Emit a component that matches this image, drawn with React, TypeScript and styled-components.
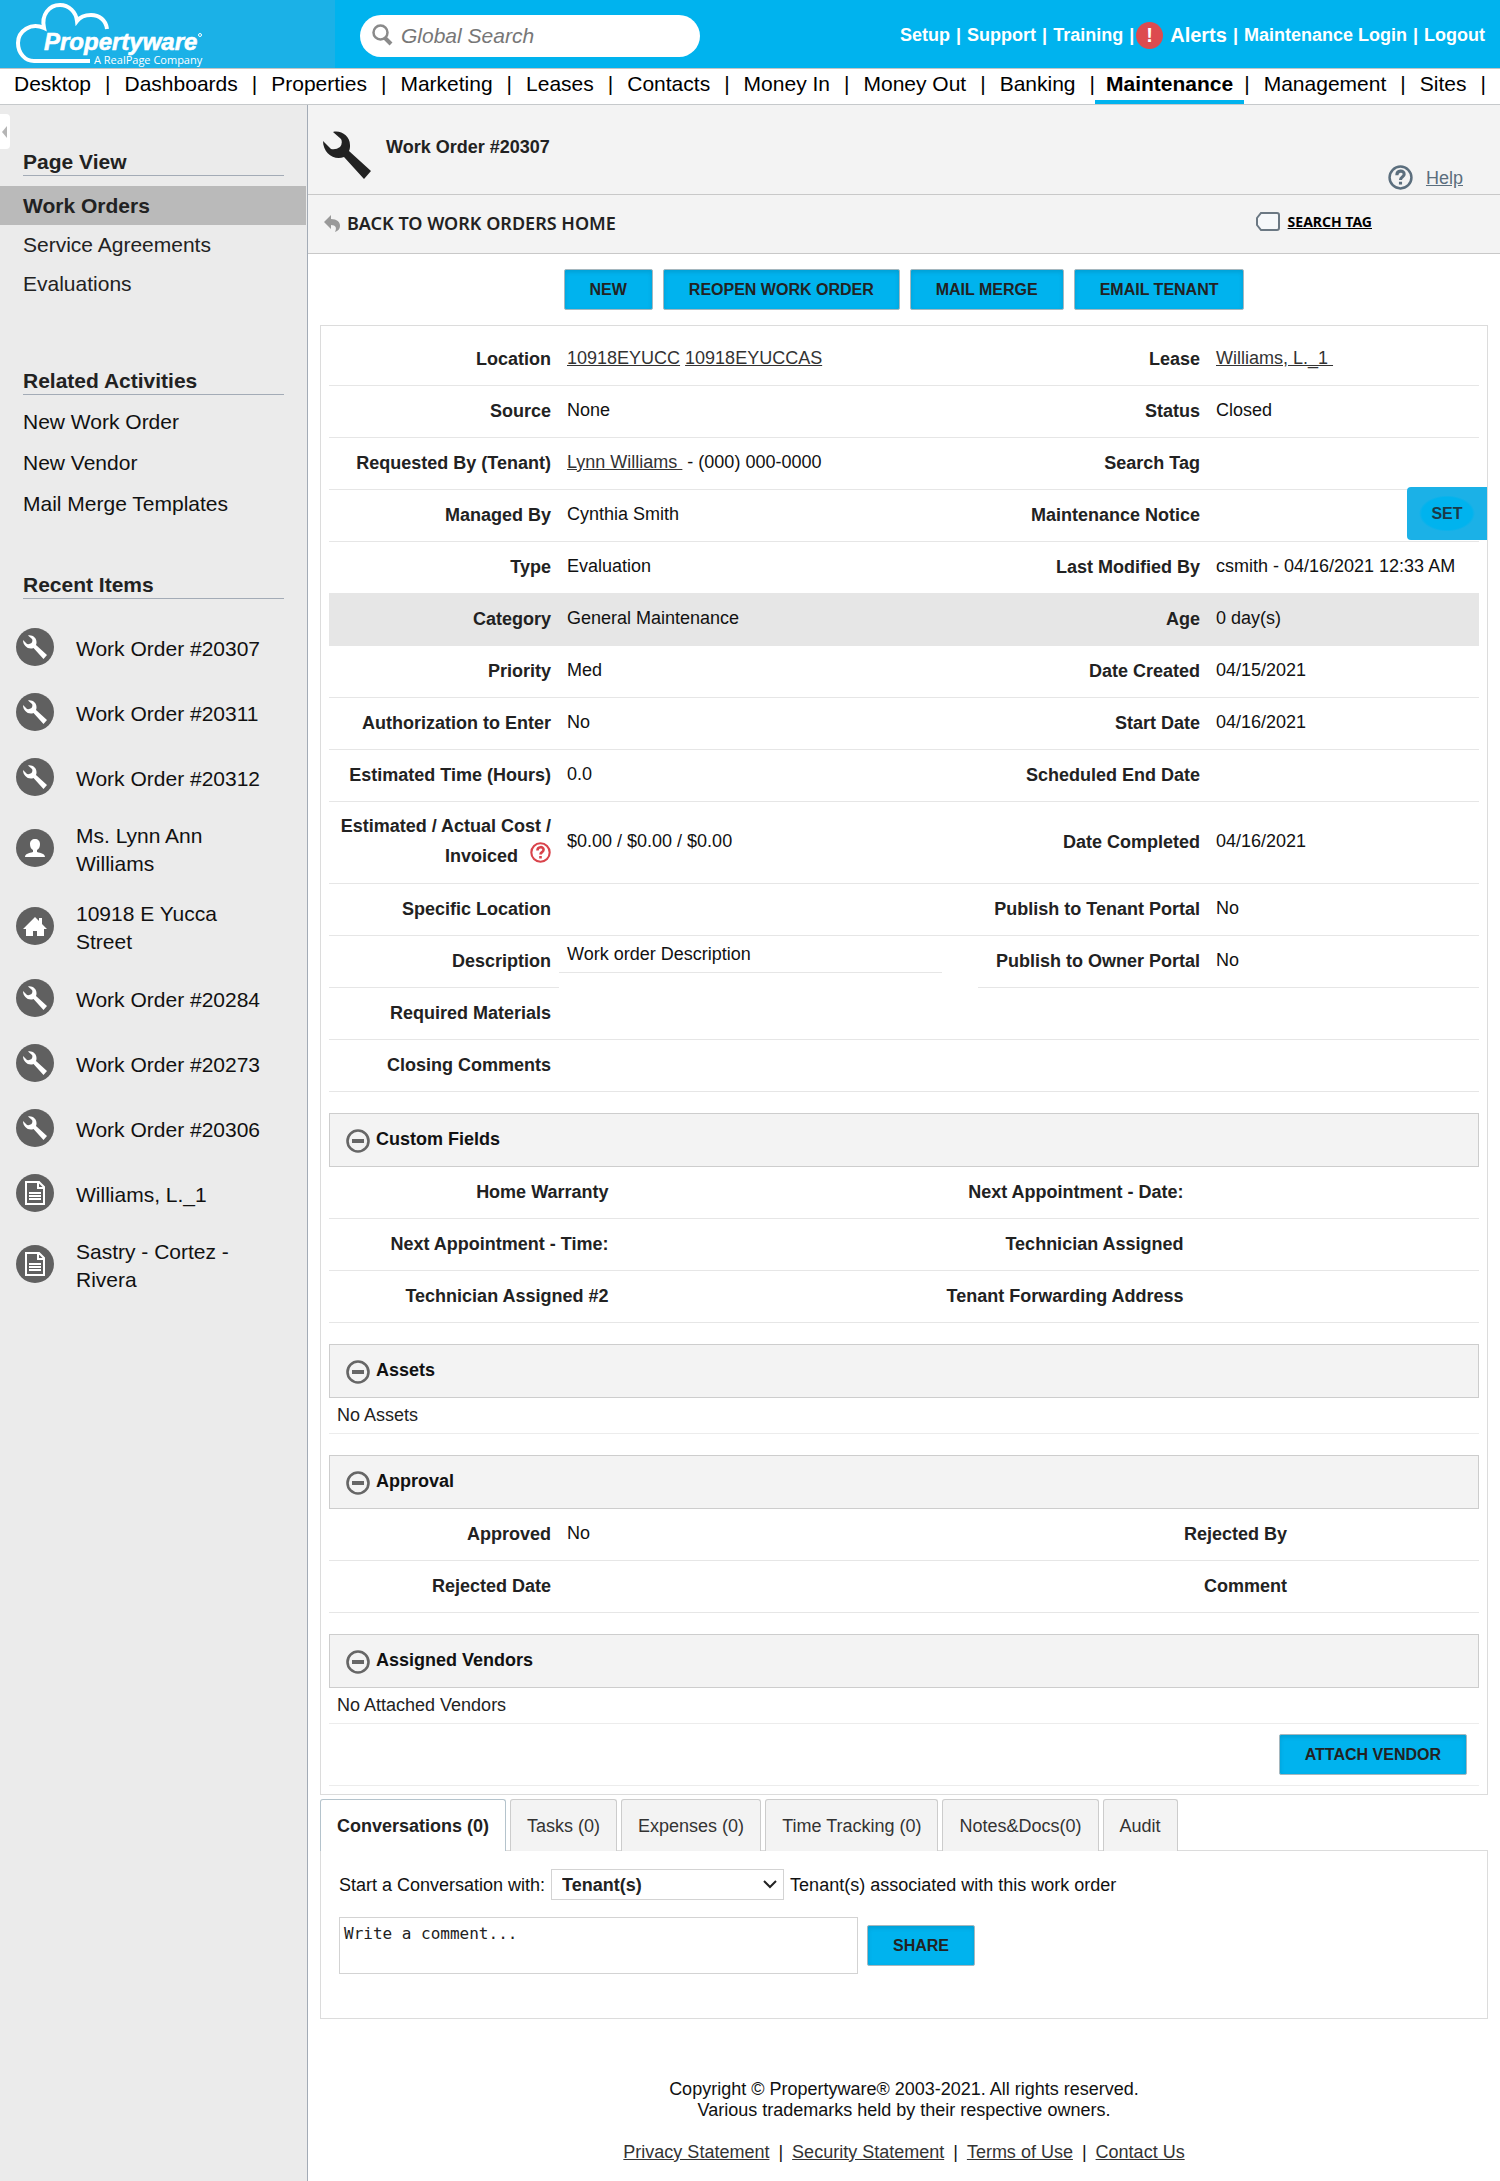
import React from "react";
import styled, { createGlobalStyle, css } from "styled-components";

const sans = `"Liberation Sans", Arial, sans-serif`;
const humanist = `"Noto Sans", "Open Sans", sans-serif`;
const brand = "#00b3ee";

const GlobalStyle = createGlobalStyle`
  * { box-sizing: border-box; }
  body { margin: 0; background: #fff; color: #222; font: 18px/30px ${sans}; }
  a { color: inherit; text-decoration: none; }
  ul, dl, dd, h1, h2, p { margin: 0; padding: 0; }
  ul { list-style: none; }
  svg { display: block; flex: none; }
`;

const Page = styled.div`
  display: flex;
  flex-direction: column;
  min-height: 100vh;
`;

/* ---------- Top bar ---------- */
const TopBar = styled.header`
  display: flex;
  align-items: stretch;
  height: 68px;
  background: ${brand};
  color: #fff;
`;
const Brand = styled.a`
  width: 335px;
  background: #1bb1e7;
`;
const SearchBox = styled.label`
  display: flex;
  align-items: center;
  gap: 6px;
  align-self: center;
  width: 340px;
  height: 42px;
  margin: 4px 0 0 25px;
  padding: 0 12px;
  border-radius: 21px;
  background: #fff;
`;
const SearchInput = styled.input`
  flex: 1;
  min-width: 0;
  border: 0;
  outline: 0;
  background: none;
  font: italic 21px/24px ${sans};
  color: #777;
  &::placeholder { color: #777; opacity: 1; }
`;
const TopLinks = styled.nav`
  display: flex;
  align-items: center;
  gap: 6px;
  margin-left: auto;
  padding: 2px 15px 0 0;
  font-weight: bold;
  white-space: nowrap;
`;
const AlertsLink = styled.a`
  display: flex;
  align-items: center;
  gap: 7px;
  margin-left: -4px;
  font-size: 20px;
`;
const AlertBadge = styled.span`
  width: 27px;
  height: 27px;
  border-radius: 50%;
  background: #dd4b4f;
  font: bold 20px/27px ${sans};
  text-align: center;
`;

/* ---------- Main navigation ---------- */
const NavBar = styled.nav`
  display: flex;
  height: 37px;
  border-top: 1px solid #c4c4c4;
  border-bottom: 1px solid #c6c9cb;
  overflow: hidden;
  white-space: nowrap;
  font-size: 21px;
  line-height: 30px;
  color: #000;
`;
const NavItem = styled.a<{ $active?: boolean }>`
  padding: 0 14px;
  ${(p) =>
    p.$active &&
    css`
      padding: 0 11px;
      border-bottom: 4px solid ${brand};
      font-weight: bold;
    `}
`;

/* ---------- Sidebar ---------- */
const Columns = styled.div`
  display: grid;
  grid-template-columns: 308px minmax(0, 1fr);
  flex: 1;
`;
const Sidebar = styled.aside`
  position: relative;
  padding: 42px 0 24px;
  border-right: 1px solid #a3abb6;
  background: #ebebeb;
  font-size: 21px;
  line-height: 28px;
`;
const Collapse = styled.button`
  position: absolute;
  top: 9px;
  left: 0;
  width: 10px;
  height: 35px;
  padding: 0 2px;
  border: 0;
  border-radius: 0 4px 4px 0;
  background: #fff;
`;
const SideTitle = styled.h2`
  margin: 0 23px;
  padding-top: 2px;
  border-bottom: 1px solid #a3abb6;
  font-size: 21px;
  line-height: 26px;
`;
const PageLinks = styled.ul`
  padding: 10px 1px 63px 0;
`;
const PageLink = styled.a<{ $active?: boolean }>`
  display: block;
  padding: 0 23px;
  line-height: 39px;
  ${(p) => p.$active && "background: #bababa; font-weight: bold;"}
`;
const ActivityLinks = styled.ul`
  padding: 6px 23px 46px;
  line-height: 41px;
  color: #111;
`;
const RecentList = styled.ul`
  padding-top: 17px;
`;
const RecentLink = styled.a`
  display: flex;
  align-items: center;
  gap: 22px;
  min-height: 65px;
  padding: 11px 40px 11px 16px;
  color: #111;
`;
const RecentIcon = styled.span`
  display: grid;
  place-items: center;
  flex: none;
  width: 38px;
  height: 38px;
  margin-bottom: 4px;
  border-radius: 50%;
  background: #606060;
  color: #fff;
`;

/* ---------- Page heading ---------- */
const Main = styled.main`
  min-width: 0;
`;
const HeadingBar = styled.div`
  display: flex;
  justify-content: space-between;
  height: 90px;
  padding: 26px 37px 0 15px;
  border-bottom: 1px solid #c8c8c8;
  background: #f3f3f3;
`;
const Heading = styled.div`
  display: flex;
  gap: 15px;
`;
const Title = styled.h1`
  font-size: 18px;
  line-height: 32px;
`;
const HelpLink = styled.a`
  display: flex;
  align-items: center;
  align-self: flex-end;
  gap: 13px;
  line-height: 32px;
  color: #5b6e7d;
  text-decoration: underline;
  & > svg { margin-bottom: 2px; }
`;
const ToolBar = styled.div`
  display: flex;
  align-items: center;
  justify-content: space-between;
  height: 59px;
  padding: 0 128px 2px 16px;
  border-bottom: 1px solid #c8c8c8;
  background: #f3f3f3;
  font-family: ${humanist};
`;
const BackLink = styled.a`
  display: flex;
  align-items: center;
  gap: 7px;
  font-weight: 600;
`;
const TagLink = styled.a`
  display: flex;
  align-items: center;
  gap: 8px;
  padding-bottom: 3px;
  font-size: 14px;
  font-weight: 700;
  color: #000;
  text-decoration: underline;
`;

/* ---------- Buttons ---------- */
const Button = styled.button`
  height: 41px;
  padding: 0 25px;
  border: 1px solid #a5b7be;
  border-radius: 2px;
  background: ${brand};
  box-shadow: inset 0 2px 4px rgba(0, 60, 90, 0.18);
  font: bold 16px/24px ${sans};
  color: #222;
  white-space: nowrap;
`;
const Actions = styled.div`
  display: flex;
  justify-content: center;
  gap: 10px;
  padding: 15px 12px;
`;

/* ---------- Detail panel ---------- */
const Panel = styled.section`
  margin: 0 12px 4px;
  padding: 8px;
  border: 1px solid #dcdcdc;
`;
type Split = "details" | "even" | "approval";
const splits: Record<Split, string> = {
  details: "230fr 419fr 230fr 271fr",
  even: "1fr 1fr 1fr 1fr",
  approval: "20fr 44fr 20fr 16fr",
};
const Row = styled.div<{ $split: Split; $marked?: boolean }>`
  position: relative;
  display: grid;
  grid-template-columns: ${(p) => splits[p.$split]};
  align-items: center;
  min-height: 52px;
  border-bottom: 1px solid #e6e6e6;
  ${(p) => p.$marked && "background: #e6e6e6;"}
`;
const Label = styled.dt`
  padding: 0 8px 2px;
  font-weight: bold;
  text-align: right;
`;
const CostLabel = styled(Label)`
  padding: 9px 8px 12px;
`;
const HelpMark = styled.span`
  display: inline-block;
  height: 20px;
  margin-left: 12px;
  vertical-align: baseline;
  line-height: 0;
`;
const Value = styled.dd`
  padding: 0 8px 4px;
  color: #111;
`;
const Link = styled.a`
  color: #333;
  text-decoration: underline;
  white-space: pre;
`;
const DescriptionRow = styled.div`
  display: grid;
  grid-template-columns: 230fr 383fr 36fr 230fr 271fr;
  min-height: 52px;
  & > dt, & > dd { padding-bottom: 0; border-bottom: 1px solid #e6e6e6; line-height: 51px; }
  & > dd:nth-of-type(2) { grid-column: 5; padding-bottom: 2px; line-height: 49px; }
  & > dt:nth-of-type(2) { grid-column: 4; }
`;
const DescriptionValue = styled(Value)`
  && { line-height: 36px; }
  align-self: start;
  height: 37px;
`;
const SetButton = styled.button`
  position: absolute;
  top: -3px;
  right: -8px;
  width: 80px;
  height: 53px;
  border: 0;
  border-radius: 4px 0 0 4px;
  background: radial-gradient(ellipse 28px 18px at center, ${brand} 90%, #1bb1e7);
  font: bold 16px/24px ${sans};
  color: #1b3a48;
`;
const SectionTitle = styled.h2`
  height: 54px;
  margin-top: 21px;
  border: 1px solid #cdcdcd;
  background: #f3f3f3;
`;
const SectionToggle = styled.button`
  display: flex;
  align-items: center;
  gap: 6px;
  width: 100%;
  height: 100%;
  padding: 0 16px 2px;
  border: 0;
  background: none;
  font: bold 18px/24px ${sans};
  color: #111;
  & > svg { margin-top: 4px; }
`;
const EmptyNote = styled.p`
  height: 36px;
  padding: 0 8px;
  border-bottom: 1px solid #ececec;
  line-height: 35px;
`;
const AttachRow = styled.div`
  display: flex;
  align-items: center;
  justify-content: flex-end;
  height: 62px;
  padding-right: 12px;
  border-bottom: 1px solid #ececec;
`;

/* ---------- Tabs ---------- */
const Tabs = styled.div`
  display: flex;
  gap: 4px;
  margin: 0 12px;
`;
const Tab = styled.button<{ $active?: boolean }>`
  height: 52px;
  margin-bottom: -1px;
  padding: 0 16px;
  border: 1px solid #ccc;
  border-bottom: 0;
  border-radius: 3px 3px 0 0;
  background: #f3f3f3;
  font: 18px/24px ${sans};
  color: #333;
  white-space: nowrap;
  ${(p) => p.$active && "background: #fff; border-color: #b4c3cc; font-weight: bold; color: #222;"}
`;
const TabPanel = styled.section`
  margin: 0 12px;
  padding: 18px 18px 44px;
  border: 1px solid #dcdcdc;
  color: #111;
`;
const AudienceLine = styled.div`
  display: flex;
  align-items: center;
  gap: 6px;
  margin-bottom: 17px;
`;
const SelectWrap = styled.span`
  position: relative;
  width: 233px;
`;
const Select = styled.select`
  display: block;
  width: 100%;
  height: 31px;
  padding: 0 30px 0 10px;
  appearance: none;
  border: 1px solid #d3d3d3;
  border-radius: 0;
  background: #fff;
  font: bold 18px/24px ${sans};
  color: #222;
`;
const Chevron = styled.svg`
  position: absolute;
  top: 11px;
  right: 7px;
  pointer-events: none;
`;
const CommentLine = styled.div`
  display: flex;
  align-items: center;
  gap: 9px;
`;
const Comment = styled.textarea`
  width: 519px;
  height: 57px;
  padding: 4px;
  border: 1px solid #d3d3d3;
  resize: none;
  font: 16px/24px "DejaVu Sans Mono", "Liberation Mono", monospace;
  &::placeholder { color: #222; opacity: 1; }
`;

/* ---------- Footer ---------- */
const Footer = styled.footer`
  padding: 60px 12px 14px;
  text-align: center;
  line-height: 21px;
  color: #111;
`;
const FooterLinks = styled.nav`
  display: flex;
  justify-content: center;
  gap: 9px;
  margin-top: 21px;
`;

/* ---------- Icons ---------- */
const Wrench = ({ size }: { size: number }) => (
  <svg width={size} height={size} viewBox="0 0 48 48" fill="currentColor" aria-hidden="true">
    <path d="M10 1C18-1 27 5 27 14c0 2 0 4-1 6l22 20-7 8-20-22C11 30 0 22 0 10l8 8q5 1 9-2 3-4 1-8z" />
  </svg>
);
const Person = () => (
  <svg width="22" height="22" viewBox="0 0 22 22" fill="#fff" aria-hidden="true">
    <path d="M11 2c3 0 5 2 5 5s-1 5-3 6v2c4 1 8 2 8 5H1c0-3 4-4 8-5v-2C7 12 6 10 6 7s2-5 5-5z" />
  </svg>
);
const House = () => (
  <svg width="24" height="22" viewBox="0 0 24 22" fill="#fff" aria-hidden="true">
    <path d="M12 2l4 4V3h3v6l5 5h-3v7h-7v-5h-4v5H3v-7H0z" />
  </svg>
);
const Doc = () => (
  <svg width="22" height="24" viewBox="0 0 22 24" fill="none" stroke="#fff" strokeWidth="2" aria-hidden="true">
    <path d="M2 1h13l5 5v17H2zM14 1v6h6M5 12h12M5 15h12M5 18h12" />
  </svg>
);
const Question = ({ size, color }: { size: number; color: string }) => (
  <svg width={size} height={size} viewBox="0 0 24 24" fill="none" stroke={color} aria-hidden="true">
    <circle cx="12" cy="12" r="10.5" strokeWidth="2.4" />
    <path d="M8.5 9.800c0-5 7-5 7-1 0 3-3.500 2.500-3.500 5.500M12 16v2.800" strokeWidth="3" />
  </svg>
);
const Minus = () => (
  <svg width="24" height="24" viewBox="0 0 24 24" fill="none" stroke="#666" strokeWidth="4" aria-hidden="true">
    <circle cx="12" cy="12" r="10.5" strokeWidth="2.600" />
    <path d="M6 12h12" />
  </svg>
);
const Logo = () => (
  <svg width="210" height="68" viewBox="0 0 210 68" role="img" aria-label="Propertyware, A RealPage Company">
    <path
      d="M107 29C106 20 99 15 91 15c-6 0-11 2-14 6C76 12 69 5 60 5 49 5 41 15 44 28 31 22 18 31 18 43c0 10 7 18 16 18h56"
      fill="none"
      stroke="#fff"
      strokeWidth="4"
    />
    <text x="44" y="50" fill="#fff" stroke="#fff" strokeWidth="0.6" fontFamily="Liberation Sans, Arial, sans-serif" fontSize="24" fontWeight="700" fontStyle="italic">
      Propertyware
    </text>
    <circle cx="200" cy="35" r="1.5" fill="none" stroke="#fff" />
    <text x="94" y="64" fill="#fff" fontFamily="Open Sans, sans-serif" fontSize="11">
      A RealPage Company
    </text>
  </svg>
);

/* ---------- Data ---------- */
const navItems = ["Desktop", "Dashboards", "Properties", "Marketing", "Leases", "Contacts", "Money In", "Money Out", "Banking", "Maintenance", "Management", "Sites"];
const order = (n: number) => ({ icon: <Wrench size={24} />, text: `Work Order #${n}` });
const recents = [
  order(20307),
  order(20311),
  order(20312),
  { icon: <Person />, text: "Ms. Lynn Ann Williams" },
  { icon: <House />, text: "10918 E Yucca Street" },
  order(20284),
  order(20273),
  order(20306),
  { icon: <Doc />, text: "Williams, L._1" },
  { icon: <Doc />, text: "Sastry - Cortez - Rivera" },
];

type Cell = React.ReactNode;
interface FieldsProps {
  split?: Split;
  left: string;
  leftValue?: Cell;
  right?: string;
  rightValue?: Cell;
  marked?: boolean;
}
const Fields = ({ split = "details", left, leftValue, right, rightValue, marked }: FieldsProps) => (
  <Row $split={split} $marked={marked}>
    <Label>{left}</Label>
    <Value>{leftValue}</Value>
    {right && <Label>{right}</Label>}
    {right && <Value>{rightValue}</Value>}
  </Row>
);

const Section = ({ title }: { title: string }) => (
  <SectionTitle>
    <SectionToggle type="button" aria-expanded="true">
      <Minus />
      {title}
    </SectionToggle>
  </SectionTitle>
);

export default function App() {
  return (
    <Page>
      <GlobalStyle />
      <TopBar>
        <Brand href="#"><Logo /></Brand>
        <SearchBox aria-label="Global Search">
          <svg width="21" height="24" viewBox="0 0 21 24" fill="none" stroke="#8a8a8a" aria-hidden="true">
            <circle cx="8.5" cy="8.5" r="7" strokeWidth="2.5" />
            <path d="M13 14l6 6" strokeWidth="4" />
          </svg>
          <SearchInput type="search" placeholder="Global Search" />
        </SearchBox>
        <TopLinks>
          <a href="#">Setup</a>
          <span>|</span>
          <a href="#">Support</a>
          <span>|</span>
          <a href="#">Training</a>
          <span>|</span>
          <AlertsLink href="#"><AlertBadge>!</AlertBadge>Alerts</AlertsLink>
          <span>|</span>
          <a href="#">Maintenance Login</a>
          <span>|</span>
          <a href="#">Logout</a>
        </TopLinks>
      </TopBar>
      <NavBar>
        {navItems.map((name) => (
          <React.Fragment key={name}>
            <NavItem href="#" $active={name === "Maintenance"}>{name}</NavItem>
            <span>|</span>
          </React.Fragment>
        ))}
      </NavBar>
      <Columns>
        <Sidebar>
          <Collapse type="button" aria-label="Collapse sidebar">
            <svg width="5" height="12" viewBox="0 0 5 12"><path d="M5 0v12L0 6z" fill="#b5b5b5" /></svg>
          </Collapse>
          <SideTitle>Page View</SideTitle>
          <PageLinks>
            <li><PageLink href="#" $active>Work Orders</PageLink></li>
            <li><PageLink href="#">Service Agreements</PageLink></li>
            <li><PageLink href="#">Evaluations</PageLink></li>
          </PageLinks>
          <SideTitle>Related Activities</SideTitle>
          <ActivityLinks>
            <li><a href="#">New Work Order</a></li>
            <li><a href="#">New Vendor</a></li>
            <li><a href="#">Mail Merge Templates</a></li>
          </ActivityLinks>
          <SideTitle>Recent Items</SideTitle>
          <RecentList>
            {recents.map((r) => (
              <li key={r.text}>
                <RecentLink href="#">
                  <RecentIcon>{r.icon}</RecentIcon>
                  <span>{r.text}</span>
                </RecentLink>
              </li>
            ))}
          </RecentList>
        </Sidebar>
        <Main>
          <HeadingBar>
            <Heading>
              <Wrench size={48} />
              <Title>Work Order #20307</Title>
            </Heading>
            <HelpLink href="#"><Question size={25} color="#5b6e7d" />Help</HelpLink>
          </HeadingBar>
          <ToolBar>
            <BackLink href="#">
              <svg width="16" height="18" viewBox="0 0 16 18" fill="#999" aria-hidden="true">
                <path d="M7 1v4c6 0 9 3 9 7 0 3-2 5-5 6 2-4 1-7-4-7v4L0 8z" />
              </svg>
              BACK TO WORK ORDERS HOME
            </BackLink>
            <TagLink href="#">
              <svg width="24" height="19" viewBox="0 0 24 19" fill="#f6f8fa" stroke="#6b7883" strokeWidth="2" aria-hidden="true">
                <path d="M5 1h16q2 0 2 2v13q0 2-2 2H5L1 13V6z" />
              </svg>
              SEARCH TAG
            </TagLink>
          </ToolBar>
          <Actions>
            <Button type="button">NEW</Button>
            <Button type="button">REOPEN WORK ORDER</Button>
            <Button type="button">MAIL MERGE</Button>
            <Button type="button">EMAIL TENANT</Button>
          </Actions>
          <Panel>
            <dl>
              <Fields
                left="Location"
                leftValue={<><Link href="#">10918EYUCC</Link> <Link href="#">10918EYUCCAS</Link></>}
                right="Lease"
                rightValue={<Link href="#">{"Williams, L._1 "}</Link>}
              />
              <Fields left="Source" leftValue="None" right="Status" rightValue="Closed" />
              <Fields
                left="Requested By (Tenant)"
                leftValue={<><Link href="#">{"Lynn Williams "}</Link> - (000) 000-0000</>}
                right="Search Tag"
              />
              <Fields
                left="Managed By"
                leftValue="Cynthia Smith"
                right="Maintenance Notice"
                rightValue={<SetButton type="button">SET</SetButton>}
              />
              <Fields left="Type" leftValue="Evaluation" right="Last Modified By" rightValue="csmith - 04/16/2021 12:33 AM" />
              <Fields marked left="Category" leftValue="General Maintenance" right="Age" rightValue="0 day(s)" />
              <Fields left="Priority" leftValue="Med" right="Date Created" rightValue="04/15/2021" />
              <Fields left="Authorization to Enter" leftValue="No" right="Start Date" rightValue="04/16/2021" />
              <Fields left="Estimated Time (Hours)" leftValue="0.0" right="Scheduled End Date" />
              <Row $split="details">
                <CostLabel>
                  Estimated / Actual Cost / Invoiced
                  <HelpMark><Question size={21} color="#d9434b" /></HelpMark>
                </CostLabel>
                <Value>$0.00 / $0.00 / $0.00</Value>
                <Label>Date Completed</Label>
                <Value>04/16/2021</Value>
              </Row>
              <Fields left="Specific Location" right="Publish to Tenant Portal" rightValue="No" />
              <DescriptionRow>
                <Label>Description</Label>
                <DescriptionValue>Work order Description</DescriptionValue>
                <Label>Publish to Owner Portal</Label>
                <Value>No</Value>
              </DescriptionRow>
              <Fields left="Required Materials" />
              <Fields left="Closing Comments" />
            </dl>
            <Section title="Custom Fields" />
            <dl>
              <Fields split="even" left="Home Warranty" right="Next Appointment - Date:" />
              <Fields split="even" left="Next Appointment - Time:" right="Technician Assigned" />
              <Fields split="even" left="Technician Assigned #2" right="Tenant Forwarding Address" />
            </dl>
            <Section title="Assets" />
            <EmptyNote>No Assets</EmptyNote>
            <Section title="Approval" />
            <dl>
              <Fields split="approval" left="Approved" leftValue="No" right="Rejected By" />
              <Fields split="approval" left="Rejected Date" right="Comment" />
            </dl>
            <Section title="Assigned Vendors" />
            <EmptyNote>No Attached Vendors</EmptyNote>
            <AttachRow><Button type="button">ATTACH VENDOR</Button></AttachRow>
          </Panel>
          <Tabs role="tablist">
            <Tab type="button" role="tab" aria-selected="true" $active>Conversations (0)</Tab>
            <Tab type="button" role="tab">Tasks (0)</Tab>
            <Tab type="button" role="tab">Expenses (0)</Tab>
            <Tab type="button" role="tab">Time Tracking (0)</Tab>
            <Tab type="button" role="tab">Notes&amp;Docs(0)</Tab>
            <Tab type="button" role="tab">Audit</Tab>
          </Tabs>
          <TabPanel role="tabpanel">
            <AudienceLine>
              <label htmlFor="audience">Start a Conversation with:</label>
              <SelectWrap>
                <Select id="audience" defaultValue="tenants">
                  <option value="tenants">Tenant(s)</option>
                </Select>
                <Chevron width="14" height="10" viewBox="0 0 14 10" fill="none" stroke="#222" strokeWidth="2">
                  <path d="M1 1l6 6 6-6" />
                </Chevron>
              </SelectWrap>
              <span>Tenant(s) associated with this work order</span>
            </AudienceLine>
            <CommentLine>
              <Comment aria-label="Comment" placeholder="Write a comment..." />
              <Button type="button">SHARE</Button>
            </CommentLine>
          </TabPanel>
          <Footer>
            <p>Copyright © Propertyware® 2003-2021. All rights reserved.</p>
            <p>Various trademarks held by their respective owners.</p>
            <FooterLinks>
              <Link href="#">Privacy Statement</Link>
              <span>|</span>
              <Link href="#">Security Statement</Link>
              <span>|</span>
              <Link href="#">Terms of Use</Link>
              <span>|</span>
              <Link href="#">Contact Us</Link>
            </FooterLinks>
          </Footer>
        </Main>
      </Columns>
    </Page>
  );
}
